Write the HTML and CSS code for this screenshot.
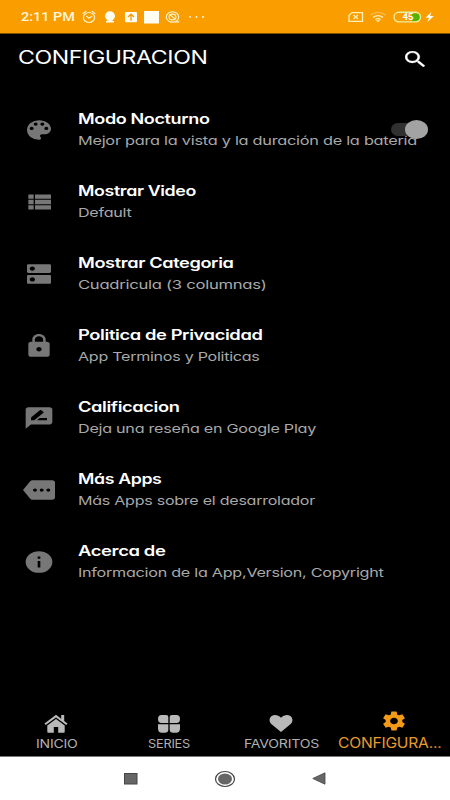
FILE: index.html
```html
<!DOCTYPE html>
<html lang="es">
<head>
<meta charset="utf-8">
<title>Configuracion</title>
<link rel="stylesheet" href="styles.css">
</head>
<body>
<div class="screen">
  <div class="status">
    <span class="clock"><span class="fit" data-w="54">2:11 PM</span></span>
    <svg class="status-left" viewBox="0 0 126 16" width="126" height="16">
      <g fill="none" stroke="#fff1c4" stroke-width="1.2" stroke-linecap="round">
        <ellipse cx="7" cy="8.5" rx="5.6" ry="5"/>
        <path d="M4.5 7.3L7 9.3l2.8-2M1 4.4L4 2.3M13 4.4L10 2.3"/>
        <ellipse cx="90.5" cy="8" rx="6.2" ry="5.2"/>
        <ellipse cx="90.5" cy="8" rx="3.4" ry="2.8"/>
        <path d="M88.500 6.200l4.500 3.600M93.500 12.800h3.500"/>
      </g>
      <g fill="#fffdf2">
        <ellipse cx="28" cy="6.900" rx="5" ry="4.600"/>
        <path d="M24 12.300q4-2.600 8 0v1.200h-8z"/>
        <rect x="43" y="3" width="12" height="10.300" rx="1"/>
        <rect x="62" y="2" width="15" height="12.500"/>
        <circle cx="108" cy="8" r=".9"/><circle cx="114.500" cy="8" r=".9"/><circle cx="121" cy="8" r=".9"/>
      </g>
      <path d="M49 11.700V5.500M46 8l3-2.800L52 8" fill="none" stroke="#f79b00" stroke-width="1.300"/>
    </svg>
    <svg class="status-right" viewBox="0 0 88 16" width="88" height="16">
      <g fill="none" stroke="#fff1b8" stroke-width="1.300">
        <path d="M4 3.600h10.500v8.800H1V6.200z"/>
        <path d="M5.500 6L10 10M10 6l-4.500 4"/>
        <path d="M22.300 6q7.700-5.200 15.400 0" opacity=".4"/>
        <path d="M25 8.400q5-3.600 10 0"/>
        <path d="M27.300 10.500q2.700-1.900 5.400 0"/>
      </g>
      <path d="M27.800 11.300h4.400L30 13.200z" fill="#fff1b8"/>
      <path d="M64 4.500h4.500a3.500 3.500 0 0 1 0 7.500H64z" fill="#55b200"/>
      <rect x="46" y="3.300" width="26.500" height="9.600" rx="4.800" fill="none" stroke="#eaf0a0" stroke-width="1.400"/>
      <text x="54.500" y="11.300" class="battery" textLength="11" lengthAdjust="spacingAndGlyphs">45</text>
      <path d="M83.500 3l-6 5.700h3.600L79.500 13l6.300-6h-3.700z" fill="#fff"/>
    </svg>
  </div>

  <header class="header">
    <h1><span class="fit" data-w="189.500">CONFIGURACION</span></h1>
    <svg class="search" viewBox="3 3 17.490 17.490" preserveAspectRatio="none"><path d="M15.500 14h-.79l-.28-.27A6.470 6.470 0 0 0 16 9.500 6.500 6.500 0 1 0 9.500 16c1.610 0 3.090-.59 4.230-1.570l.27.28v.79l5 4.990L20.490 19l-4.990-5zm-6 0C7.010 14 5 11.990 5 9.500S7.010 5 9.500 5 14 7.010 14 9.500 11.990 14 9.500 14z"/></svg>
  </header>

  <main class="list">
    <div class="row">
      <svg class="icon" viewBox="0 0 24 24" preserveAspectRatio="none"><path d="M12 3a9 9 0 0 0 0 18c.83 0 1.500-.67 1.500-1.500 0-.39-.15-.74-.39-1.010-.23-.26-.38-.61-.38-.99 0-.83.67-1.500 1.500-1.500H16c2.760 0 5-2.240 5-5 0-4.420-4.030-8-9-8zm-5.500 9a1.500 1.500 0 1 1 0-3 1.500 1.500 0 0 1 0 3zm3-4a1.500 1.500 0 1 1 0-3 1.500 1.500 0 0 1 0 3zm5 0a1.500 1.500 0 1 1 0-3 1.500 1.500 0 0 1 0 3zm3 4a1.500 1.500 0 1 1 0-3 1.500 1.500 0 0 1 0 3z"/></svg>
      <div class="text">
        <div class="title"><span class="fit" data-w="131.500">Modo Nocturno</span></div>
        <div class="sub"><span class="fit" data-w="339">Mejor para la vista y la duración de la batería</span></div>
      </div>
      <div class="switch"><span class="thumb"></span></div>
    </div>
    <div class="row">
      <svg class="icon" viewBox="0 0 24 24" preserveAspectRatio="none"><path d="M4 14h4v-4H4v4zm0 5h4v-4H4v4zM4 9h4V5H4v4zm5 5h12v-4H9v4zm0 5h12v-4H9v4zM9 5v4h12V5H9z"/></svg>
      <div class="text">
        <div class="title"><span class="fit" data-w="118">Mostrar Video</span></div>
        <div class="sub"><span class="fit" data-w="53.500">Default</span></div>
      </div>
    </div>
    <div class="row">
      <svg class="icon" viewBox="0 0 24 24" preserveAspectRatio="none"><path d="M20 13H4c-.55 0-1 .45-1 1v6c0 .55.45 1 1 1h16c.55 0 1-.45 1-1v-6c0-.55-.45-1-1-1zM7 19c-1.100 0-2-.9-2-2s.9-2 2-2 2 .9 2 2-.9 2-2 2zM20 3H4c-.55 0-1 .45-1 1v6c0 .55.45 1 1 1h16c.55 0 1-.45 1-1V4c0-.55-.45-1-1-1zM7 9c-1.100 0-2-.9-2-2s.9-2 2-2 2 .9 2 2-.9 2-2 2z"/></svg>
      <div class="text">
        <div class="title"><span class="fit" data-w="155.500">Mostrar Categoria</span></div>
        <div class="sub"><span class="fit" data-w="188.500">Cuadricula (3 columnas)</span></div>
      </div>
    </div>
    <div class="row">
      <svg class="icon" viewBox="0 0 24 24" preserveAspectRatio="none"><path d="M18 8h-1V6c0-2.760-2.240-5-5-5S7 3.240 7 6v2H6c-1.100 0-2 .9-2 2v10c0 1.100.9 2 2 2h12c1.100 0 2-.9 2-2V10c0-1.100-.9-2-2-2zm-6 9c-1.100 0-2-.9-2-2s.9-2 2-2 2 .9 2 2-.9 2-2 2zm3.100-9H8.900V6c0-1.710 1.390-3.100 3.100-3.100s3.100 1.390 3.100 3.100v2z"/></svg>
      <div class="text">
        <div class="title"><span class="fit" data-w="184.500">Politica de Privacidad</span></div>
        <div class="sub"><span class="fit" data-w="181.500">App Terminos y Politicas</span></div>
      </div>
    </div>
    <div class="row">
      <svg class="icon" viewBox="0 0 24 24" preserveAspectRatio="none"><path d="M20 2H4c-1.100 0-1.990.9-1.990 2L2 22l4-4h14c1.100 0 2-.9 2-2V4c0-1.100-.9-2-2-2zM6 14v-2.470l6.880-6.880c.2-.2.51-.2.71 0l1.770 1.770c.2.2.2.51 0 .71L8.470 14H6zm12 0h-7.500l2-2H18v2z"/></svg>
      <div class="text">
        <div class="title"><span class="fit" data-w="101.500">Calificacion</span></div>
        <div class="sub"><span class="fit" data-w="238">Deja una reseña en Google Play</span></div>
      </div>
    </div>
    <div class="row">
      <svg class="icon" viewBox="0 0 24 24" preserveAspectRatio="none"><path d="M22 3H7c-.69 0-1.230.35-1.590.88L0 12l5.410 8.110c.36.53.9.89 1.590.89h15c1.100 0 2-.9 2-2V5c0-1.100-.9-2-2-2zM9 13.500a1.500 1.500 0 1 1 0-3 1.500 1.500 0 0 1 0 3zm5 0a1.500 1.500 0 1 1 0-3 1.500 1.500 0 0 1 0 3zm5 0a1.500 1.500 0 1 1 0-3 1.500 1.500 0 0 1 0 3z"/></svg>
      <div class="text">
        <div class="title"><span class="fit" data-w="83.500">Más Apps</span></div>
        <div class="sub"><span class="fit" data-w="237">Más Apps sobre el desarrolador</span></div>
      </div>
    </div>
    <div class="row">
      <svg class="icon" viewBox="0 0 24 24" preserveAspectRatio="none"><path d="M12 2a10 10 0 1 0 0 20 10 10 0 0 0 0-20zm1 15h-2v-6h2v6zm0-8h-2V7h2v2z"/></svg>
      <div class="text">
        <div class="title"><span class="fit" data-w="87.500">Acerca de</span></div>
        <div class="sub"><span class="fit" data-w="305.500">Informacion de la App,Version, Copyright</span></div>
      </div>
    </div>
  </main>

  <nav class="tabs">
    <div class="tab">
      <svg width="24" height="19" viewBox="0 0 24 19"><path d="M12 .8L.5 9.600l1.200 1.500L12 3.400l10.300 7.700 1.200-1.500L20.200 7V1h-3v3.800z"/><path d="M12 4.900L3.300 11.400V18q0 .7.8.7H9.800V13h4.400v5.700h5.700q.8 0 .8-.7v-6.600z"/></svg>
      <div class="label"><span class="fit" data-w="41.500">INICIO</span></div>
    </div>
    <div class="tab">
      <svg width="24" height="19" viewBox="0 0 24 19"><path d="M4.500 1h4.700q2.100 0 2.100 2v6H4.500Q1 9 1 5t3.500-4zM19.500 1h-4.700q-2.100 0-2.100 2v6h6.800Q23 9 23 5t-3.500-4zM1 10.300h10.300v5.200q0 3.200-3.500 3.200H5Q1 18.700 1 14.500zM23 10.300H12.700v5.200q0 3.200 3.500 3.200H19q4 0 4-4.200z"/></svg>
      <div class="label"><span class="fit" data-w="42">SERIES</span></div>
    </div>
    <div class="tab">
      <svg width="24" height="19" viewBox="0 0 24 19"><path d="M12 18L2.600 10.200C-.5 7.500.2 3.600 2.700 1.900 5.600 0 9.300 1 12 3.700 14.700 1 18.400 0 21.300 1.900c2.500 1.700 3.200 5.600.1 8.300z"/></svg>
      <div class="label"><span class="fit" data-w="75">FAVORITOS</span></div>
    </div>
    <div class="tab active">
      <svg width="24" height="20" viewBox="1.200 1.500 21.600 21" preserveAspectRatio="none"><path d="M19.430 12.980c.04-.32.07-.64.07-.98s-.03-.66-.07-.98l2.110-1.650c.19-.15.24-.42.12-.64l-2-3.460c-.12-.22-.39-.3-.61-.22l-2.490 1c-.52-.4-1.080-.73-1.690-.98l-.38-2.650A.49.49 0 0 0 14 2h-4c-.25 0-.46.18-.49.42l-.38 2.650c-.61.25-1.170.59-1.690.98l-2.490-1c-.23-.09-.49 0-.61.22l-2 3.460c-.13.22-.07.49.12.64l2.110 1.650c-.04.32-.07.65-.07.98s.03.66.07.98l-2.110 1.650c-.19.15-.24.42-.12.64l2 3.460c.12.22.39.3.61.22l2.490-1c.52.4 1.080.73 1.690.98l.38 2.650c.03.24.24.42.49.42h4c.25 0 .46-.18.49-.42l.38-2.650c.61-.25 1.170-.59 1.690-.98l2.490 1c.23.09.49 0 .61-.22l2-3.460c.12-.22.07-.49-.12-.64l-2.110-1.650zM12 15.500c-1.930 0-3.500-1.570-3.500-3.500s1.570-3.500 3.500-3.500 3.500 1.570 3.500 3.500-1.570 3.500-3.500 3.500z"/></svg>
      <div class="label"><span class="fit" data-w="103.500">CONFIGURA...</span></div>
    </div>
  </nav>

  <footer class="system">
    <svg width="14" height="12" viewBox="0 0 14 12"><rect x=".5" y=".5" width="12.500" height="10.500" fill="#666" stroke="#444"/></svg>
    <svg width="22" height="18" viewBox="0 0 22 18"><ellipse cx="11" cy="9" rx="9.500" ry="7.500" fill="none" stroke="#444" stroke-width="1.200"/><ellipse cx="11" cy="9" rx="7" ry="5.600" fill="#666"/></svg>
    <svg width="14" height="13" viewBox="0 0 14 13"><path d="M.8 6.500L13 .8v11.400z" fill="#666" stroke="#444" stroke-width=".8"/></svg>
  </footer>
</div>
<script src="fit.js"></script>
</body>
</html>
```

FILE: styles.css
```css
* { box-sizing: border-box; }
body {
  margin: 0;
  background: #000;
  color: #fff;
  font-family: Inter, "Liberation Sans", sans-serif;
  font-feature-settings: "cv11";
}
.screen { width: 450px; height: 800px; display: flex; flex-direction: column; overflow: hidden; }
svg { display: block; flex: none; }
.fit { display: inline-block; white-space: nowrap; transform-origin: 0 50%; }

.status {
  height: 34px;
  flex: none;
  background: #f99d00;
  border-bottom: 1px solid #805000;
  display: flex;
  align-items: center;
  padding: 1px 14px 0 21px;
}
.clock { width: 61px; font: 500 12.5px/16px Roboto, sans-serif; color: #fff6dc; }
.status-right { margin-left: auto; }
.battery { font: 700 9px Roboto, sans-serif; fill: #fff; }

.header { height: 60px; flex: none; display: flex; justify-content: space-between; padding: 11px 25px 0 18px; }
h1 { margin: 0; font-size: 18.5px; font-weight: 400; line-height: 24px; letter-spacing: -.3px; }
.search { width: 20px; height: 16px; margin-top: 6px; fill: #fff; stroke: #fff; stroke-width: .3px; }

.list { flex: 1; }
.row { height: 72px; display: flex; align-items: center; padding: 0 23px; position: relative; }
.icon { width: 32px; height: 26px; fill: #777; margin-right: 23px; }
.title { height: 22px; font-size: 14.2px; font-weight: 600; line-height: 22px; letter-spacing: -.3px; }
.sub { height: 22px; font-size: 12.3px; font-weight: 400; line-height: 22px; letter-spacing: -.2px; color: #a9a9a9; }
.switch {
  position: absolute;
  left: 391px;
  top: 29px;
  width: 32px;
  height: 13px;
  border-radius: 7px;
  background: #303030;
}
.thumb { position: absolute; left: 14px; top: -3px; width: 23px; height: 19px; border-radius: 50%; background: #a3a3a3; }

.tabs { height: 56px; flex: none; display: grid; grid-template-columns: repeat(4, 112.5px); fill: #b9b9b9; color: #b0b0b0; }
.tab { display: flex; flex-direction: column; align-items: center; padding-top: 14px; }
.label { font-size: 12px; line-height: 22px; letter-spacing: -.2px; }
.active { fill: #f39a17; color: #e79a30; padding-top: 11px; }
.active .label { font-size: 14.2px; line-height: 24px; margin-right: 9px; }

.system {
  height: 44px;
  flex: none;
  background: #fff;
  border-top: 1px solid #777;
  display: flex;
  justify-content: center;
  align-items: center;
  gap: 76px;
}
```

FILE: fit.js
```js
// Stretches each label horizontally to its own width.
document.querySelectorAll('.fit').forEach(function (el) {
  var target = parseFloat(el.dataset.w);
  var natural = el.getBoundingClientRect().width;
  el.style.width = target + 'px';
  el.style.transform = 'scaleX(' + target / natural + ')';
});
```
